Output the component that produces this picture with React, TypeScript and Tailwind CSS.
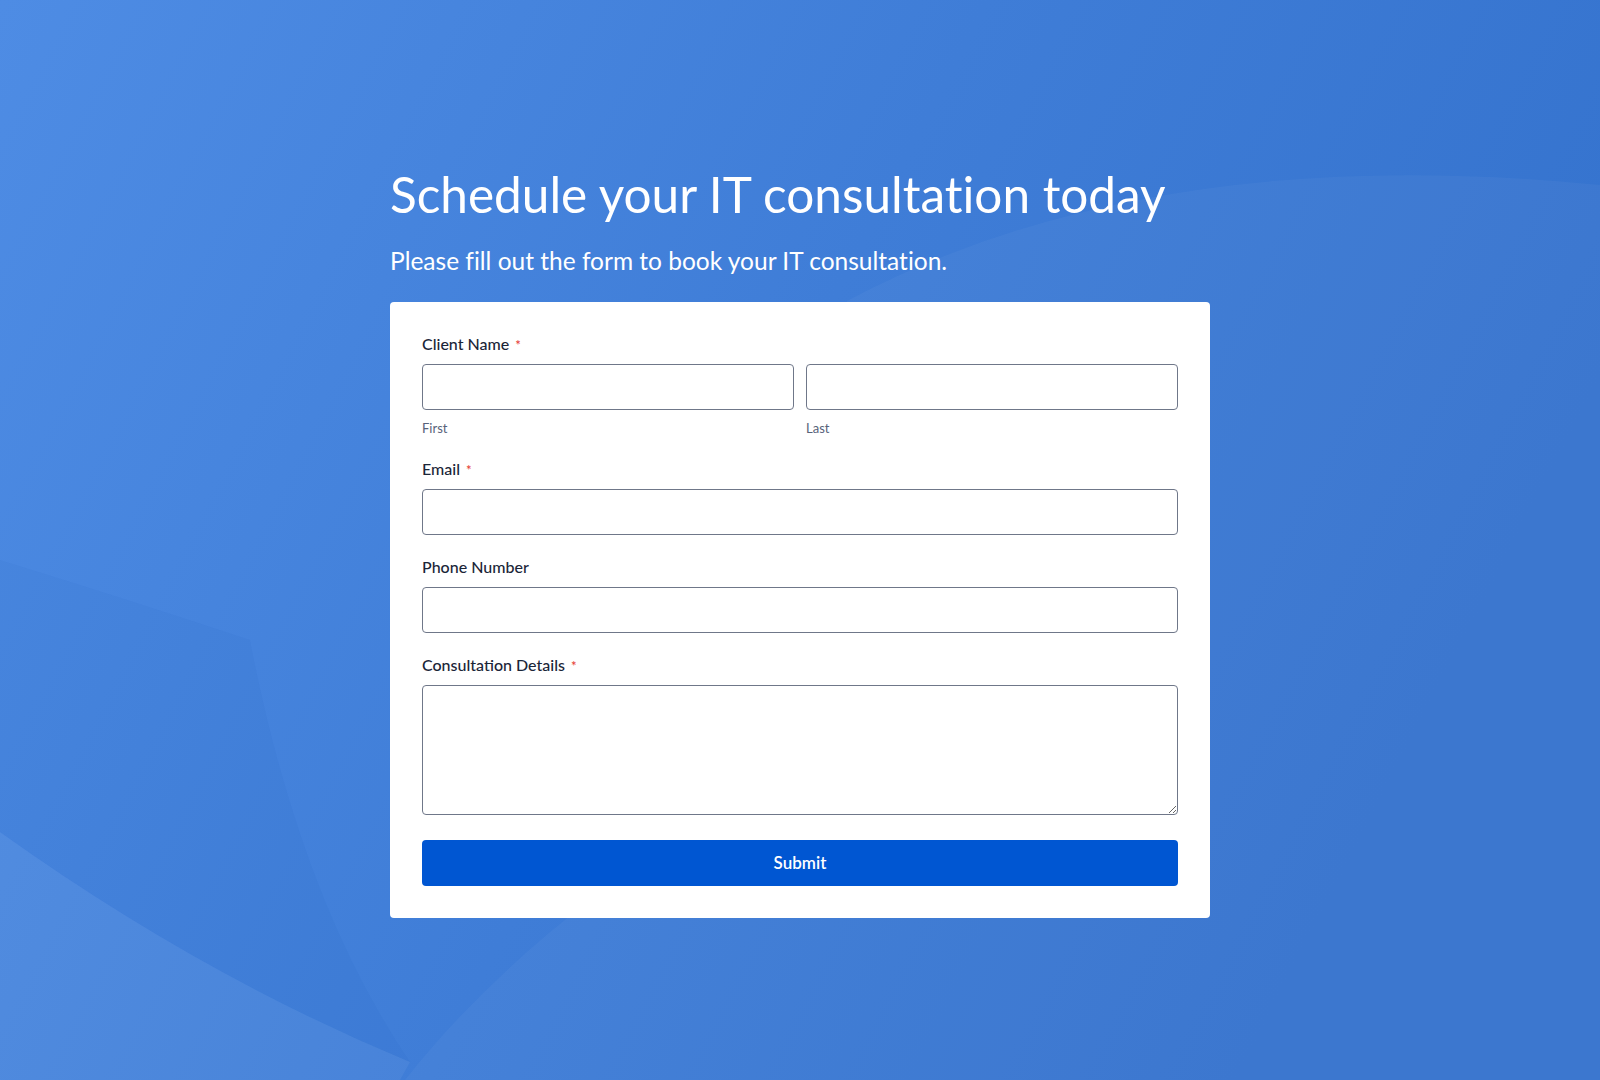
import React from "react";

const label = "block text-[16px] leading-5 font-medium text-[#1b2538]";
const input =
  "block w-full h-[46px] rounded-[4px] border border-[#6f7789] bg-white px-3 text-[15px] outline-none";

function Req() {
  return <span className="ml-1.5 text-[13px] leading-none text-[#e5352f]">*</span>;
}

function Background() {
  return (
    <svg
      className="absolute inset-0 h-full w-full"
      viewBox="0 0 1600 1080"
      preserveAspectRatio="none"
      aria-hidden
    >
      <defs>
        <linearGradient id="bg" x1="0" y1="0" x2="1" y2="0.35">
          <stop offset="0" stopColor="#4e8ce4" />
          <stop offset="0.55" stopColor="#3f7dd7" />
          <stop offset="1" stopColor="#3573ce" />
        </linearGradient>
      </defs>
      <rect width="1600" height="1080" fill="url(#bg)" />
      {/* right-hand light sweep */}
      <path
        d="M847,301 Q1150,140 1600,185 L1600,1080 L405,1080 Q480,985 590,900 L700,700 Z"
        fill="#ffffff"
        opacity="0.035"
      />
      {/* darker band above the lower-left curve */}
      <path
        d="M0,560 Q130,600 250,640 Q300,900 410,1062 Q200,975 0,832 Z"
        fill="#1d4fa8"
        opacity="0.05"
      />
      {/* lower-left light sweep */}
      <path d="M0,832 Q200,975 410,1062 L400,1080 L0,1080 Z" fill="#ffffff" opacity="0.05" />
    </svg>
  );
}

export default function App() {
  return (
    <div
      className="relative min-h-screen w-full overflow-hidden"
      style={{ fontFamily: "Lato, 'Noto Sans', sans-serif" }}
    >
      <Background />
      <div className="relative mx-auto w-[820px] pt-[162px] pb-20">
        <h1 className="text-[49.5px] leading-[64px] font-normal text-white whitespace-nowrap [font-variant-ligatures:none]">
          Schedule your IT consultation today
        </h1>
        <p className="mt-[19px] text-[24.5px] leading-8 text-white [font-variant-ligatures:none]">
          Please fill out the form to book your IT consultation.
        </p>

        <form className="mt-[25px] rounded-[4px] bg-white px-8 py-8">
          <div>
            <label className={label}>
              Client Name
              <Req />
            </label>
            <div className="mt-2.5 grid grid-cols-2 gap-3">
              <div>
                <input className={input} />
                <span className="mt-2.5 block text-[13px] leading-4 text-[#57627a]">First</span>
              </div>
              <div>
                <input className={input} />
                <span className="mt-2.5 block text-[13px] leading-4 text-[#57627a]">Last</span>
              </div>
            </div>
          </div>

          <div className="mt-[23px]">
            <label className={label}>
              Email
              <Req />
            </label>
            <input type="email" className={`${input} mt-2.5`} />
          </div>

          <div className="mt-[22px]">
            <label className={label}>Phone Number</label>
            <input type="tel" className={`${input} mt-2.5`} />
          </div>

          <div className="mt-[22px]">
            <label className={label}>
              Consultation Details
              <Req />
            </label>
            <textarea className="mt-2.5 block h-[130px] w-full rounded-[4px] border border-[#6f7789] bg-white px-3 py-2 text-[15px] outline-none" />
          </div>

          <button
            type="button"
            className="mt-[25px] block h-[46px] w-full rounded-[4px] bg-[#0056d2] text-[17px] font-semibold text-white"
          >
            Submit
          </button>
        </form>
      </div>
    </div>
  );
}
